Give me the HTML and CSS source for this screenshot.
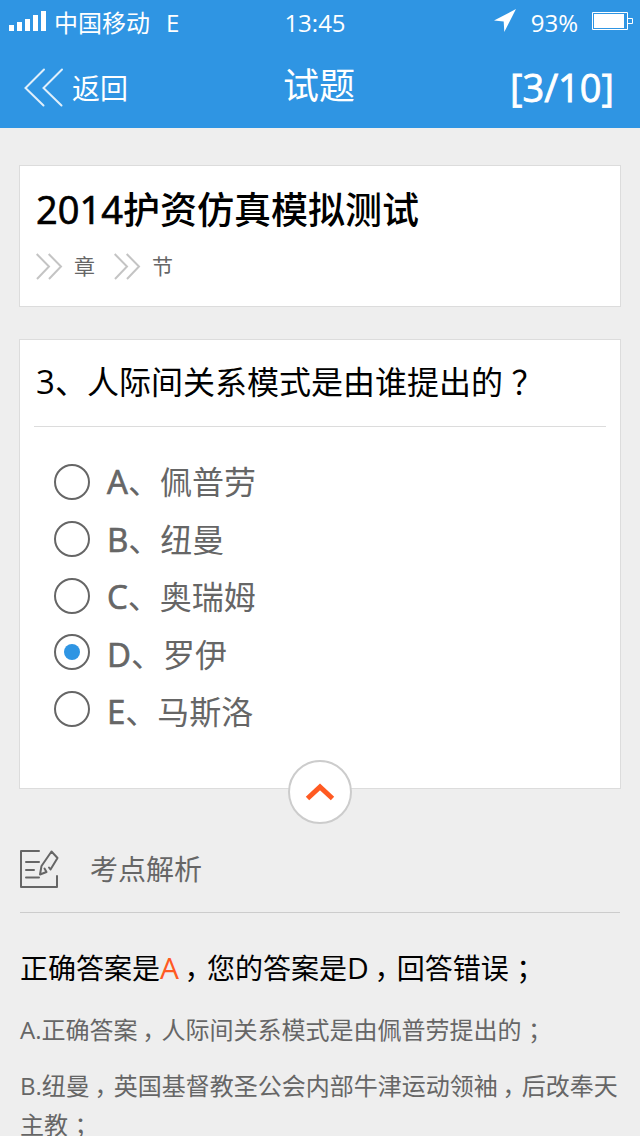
FILE: index.html
```html
<!DOCTYPE html>
<html lang="zh-CN">
<head>
    <meta charset="UTF-8">
    <title>试题</title>
    <link rel="stylesheet" href="styles.css">
</head>
<body>
    <header>
        <div class="status">
            <div class="status-left">
                <svg class="signal" width="38" height="20" viewBox="0 0 38 20" fill="#fff">
                    <rect x="0" y="14" width="5" height="6"/>
                    <rect x="8" y="11" width="5" height="9"/>
                    <rect x="16" y="8" width="5" height="12"/>
                    <rect x="24" y="4" width="5" height="16"/>
                    <rect x="32" y="0" width="5" height="20"/>
                </svg>
                <span>中国移动</span>
                <span class="network">E</span>
            </div>
            <div class="time">13:45</div>
            <div class="status-right">
                <svg class="arrow" width="22" height="23" viewBox="0 0 22 23">
                    <path d="M22 0L0 11.5L9.7 12.6L10.3 23Z" fill="#fff"/>
                </svg>
                <span>93%</span>
                <svg class="battery" width="41" height="18" viewBox="0 0 41 18">
                    <path d="M.5 .5H35.5V17.5H.5ZM35.5 6.5H40.5V11.5H35.5" fill="none" stroke="#fff"/>
                    <rect x="2" y="2" width="30" height="14" fill="#fff"/>
                </svg>
            </div>
        </div>
        <nav>
            <a class="back">
                <svg width="40" height="39" viewBox="0 0 40 39" fill="none" stroke="#fff" stroke-width="2" stroke-opacity=".85" stroke-linecap="round">
                    <path d="M20 1.5L1.5 20L19.5 37.5M38 1.5L19.5 20L37.5 37.5"/>
                </svg>
                <span>返回</span>
            </a>
            <h1>试题</h1>
            <div class="count">[3/10]</div>
        </nav>
    </header>

    <main>
        <section class="card paper">
            <h2><span class="en">2014</span>护资仿真模拟测试</h2>
            <div class="crumbs">
                <svg width="27" height="27" viewBox="0 0 27 27" fill="none" stroke="#c4c4c4" stroke-width="2">
                    <path d="M.7 1L13 13.5L1 26M12.7 1L25 13.5L13 26"/>
                </svg>
                <span>章</span>
                <svg width="27" height="27" viewBox="0 0 27 27" fill="none" stroke="#c4c4c4" stroke-width="2">
                    <path d="M.7 1L13 13.5L1 26M12.7 1L25 13.5L13 26"/>
                </svg>
                <span>节</span>
            </div>
        </section>

        <section class="card question">
            <h3><span class="en">3</span>、人际间关系模式是由谁提出的<span class="mark">？</span></h3>
            <div class="options">
                <div class="radios">
                    <i class="radio"></i>
                    <i class="radio"></i>
                    <i class="radio"></i>
                    <i class="radio checked"></i>
                    <i class="radio"></i>
                </div>
                <ul>
                    <li><span class="en">A</span>、佩普劳</li>
                    <li><span class="en">B</span>、纽曼</li>
                    <li><span class="en">C</span>、奥瑞姆</li>
                    <li><span class="en">D</span>、罗伊</li>
                    <li><span class="en">E</span>、马斯洛</li>
                </ul>
            </div>
            <div class="toggle">
                <svg width="30" height="20" viewBox="0 0 30 20" fill="none" stroke="#ff5a22" stroke-width="5">
                    <path d="M2.5 16.5L15 5L27.5 16.5"/>
                </svg>
            </div>
        </section>

        <section class="analysis">
            <div class="analysis-head">
                <svg width="40" height="40" viewBox="0 0 40 40" fill="none" stroke="#666" stroke-width="2" stroke-linecap="round" stroke-linejoin="round">
                    <path d="M19 1H1V37H37V26"/>
                    <path d="M6 12H19M6 20H14M6 27.5H19"/>
                    <path d="M30.5 19.5L29 17.5M30.5 19.5L37.5 8L31.5 1.5L21.5 16L20 24.5L26.5 22L24.5 18.5"/>
                </svg>
                <span>考点解析</span>
            </div>
            <p class="result">正确答案是<span class="en right">A</span><span class="comma">，</span>您的答案是<span class="en">D</span><span class="comma">，</span>回答错误<span class="mark">；</span></p>
            <p class="first"><span class="en">A.</span>正确答案<span class="comma">，</span>人际间关系模式是由佩普劳提出的<span class="mark">；</span></p>
            <p><span class="en">B.</span>纽曼<span class="comma">，</span>英国基督教圣公会内部牛津运动领袖<span class="comma">，</span>后改奉天<br>主教<span class="mark">；</span></p>
        </section>
    </main>
</body>
</html>
```

FILE: styles.css
```css
* {
    box-sizing: border-box;
    margin: 0;
    padding: 0;
}

body {
    width: 640px;
    height: 1136px;
    overflow: hidden;
    background-color: #eee;
    color: #666;
    font-family: "Open Sans", "Noto Sans CJK SC", sans-serif;
    white-space: nowrap;
}

svg {
    display: block;
    flex: none;
}

h1, h2, h3 {
    font-weight: 400;
}

.en {
    line-height: 1;
}

/* half-width punctuation centred in a full square */
.comma, .mark {
    display: inline-block;
    width: 1em;
    font-feature-settings: "halt" 1;
}

.comma {
    padding-left: 0.2em;
}

.mark {
    padding-left: 0.27em;
}

/* header */
header {
    height: 128px;
    background-color: #2f95e3;
    color: #fff;
}

.status {
    display: grid;
    grid-template-columns: 1fr auto 1fr;
    height: 46px;
    padding: 0 7px 0 9px;
    font-size: 24px;
    line-height: 46px;
}

.status-left, .status-right {
    display: flex;
}

.status-right {
    justify-content: flex-end;
}

.signal {
    margin: 11px 7px 0 0;
}

.network {
    margin-left: 16px;
}

.time {
    margin-right: 12px;
}

.arrow {
    margin: 9px 15px 0 0;
}

.battery {
    margin: 12px 0 0 14px;
}

nav {
    display: grid;
    grid-template-columns: 1fr auto 1fr;
    height: 82px;
    padding: 0 26px 0 24px;
    line-height: 82px;
}

.back {
    display: flex;
    gap: 8px;
    font-size: 28px;
    line-height: 84px;
}

.back svg {
    margin-top: 22px;
}

h1 {
    font-size: 36px;
    line-height: 79px;
}

.count {
    font-size: 38px;
    text-align: right;
    -webkit-text-stroke: 0.8px;
}

/* cards */
main {
    padding: 37px 19px 0;
}

.card {
    border: 1px solid #dcdcdc;
    background-color: #fff;
}

.paper {
    height: 142px;
    padding: 19px 16px 0;
}

.paper h2 {
    color: #000;
    font-size: 37px;
    font-weight: 500;
    line-height: 50px;
}

.paper .en {
    font-size: 38px;
    -webkit-text-stroke: 0.7px;
}

.crumbs {
    display: flex;
    align-items: center;
    margin-top: 18px;
    font-size: 21px;
    line-height: 27px;
}

.crumbs span {
    margin: 0 19px 0 11px;
}

.question {
    position: relative;
    height: 450px;
    margin-top: 32px;
    padding: 0 14px;
}

.question h3 {
    height: 87px;
    padding-left: 2px;
    border-bottom: 1px solid #dcdcdc;
    color: #000;
    font-size: 32px;
    line-height: 84px;
}

.question .en {
    font-size: 33px;
}

.options {
    display: flex;
    gap: 17px;
    padding-left: 20px;
}

.radios {
    display: flex;
    flex-direction: column;
    gap: 20.8px;
    padding-top: 37px;
}

.radio {
    display: flex;
    width: 36px;
    height: 36px;
    border: 2px solid #666;
    border-radius: 50%;
}

.checked::after {
    content: "";
    width: 16px;
    height: 16px;
    margin: auto;
    border-radius: 50%;
    background-color: #2f95e3;
}

.options ul {
    padding-top: 26px;
    list-style: none;
    font-size: 32px;
}

.options li {
    height: 57.6px;
    line-height: 57.6px;
}

.options .en {
    -webkit-text-stroke: 0.7px;
}

.toggle {
    position: absolute;
    bottom: -36px;
    left: 268px;
    display: flex;
    align-items: center;
    justify-content: center;
    width: 64px;
    height: 64px;
    border: 2px solid #ccc;
    border-radius: 50%;
    background-color: #fff;
}

/* analysis */
.analysis {
    padding: 38px 1px 0;
    font-size: 24px;
}

.analysis-head {
    display: flex;
    gap: 30px;
    height: 86px;
    padding-top: 23px;
    border-bottom: 1px solid #ccc;
    font-size: 28px;
    line-height: 38px;
}

.analysis p {
    margin-top: 17px;
    line-height: 39px;
}

.analysis .first {
    margin-top: 21px;
}

.analysis .en {
    font-size: 24px;
}

.analysis .result {
    margin-top: 34px;
    color: #000;
    font-size: 28px;
    line-height: 42px;
}

.result .en {
    font-size: 30px;
}

.result .right {
    color: #ff5a22;
}
```
